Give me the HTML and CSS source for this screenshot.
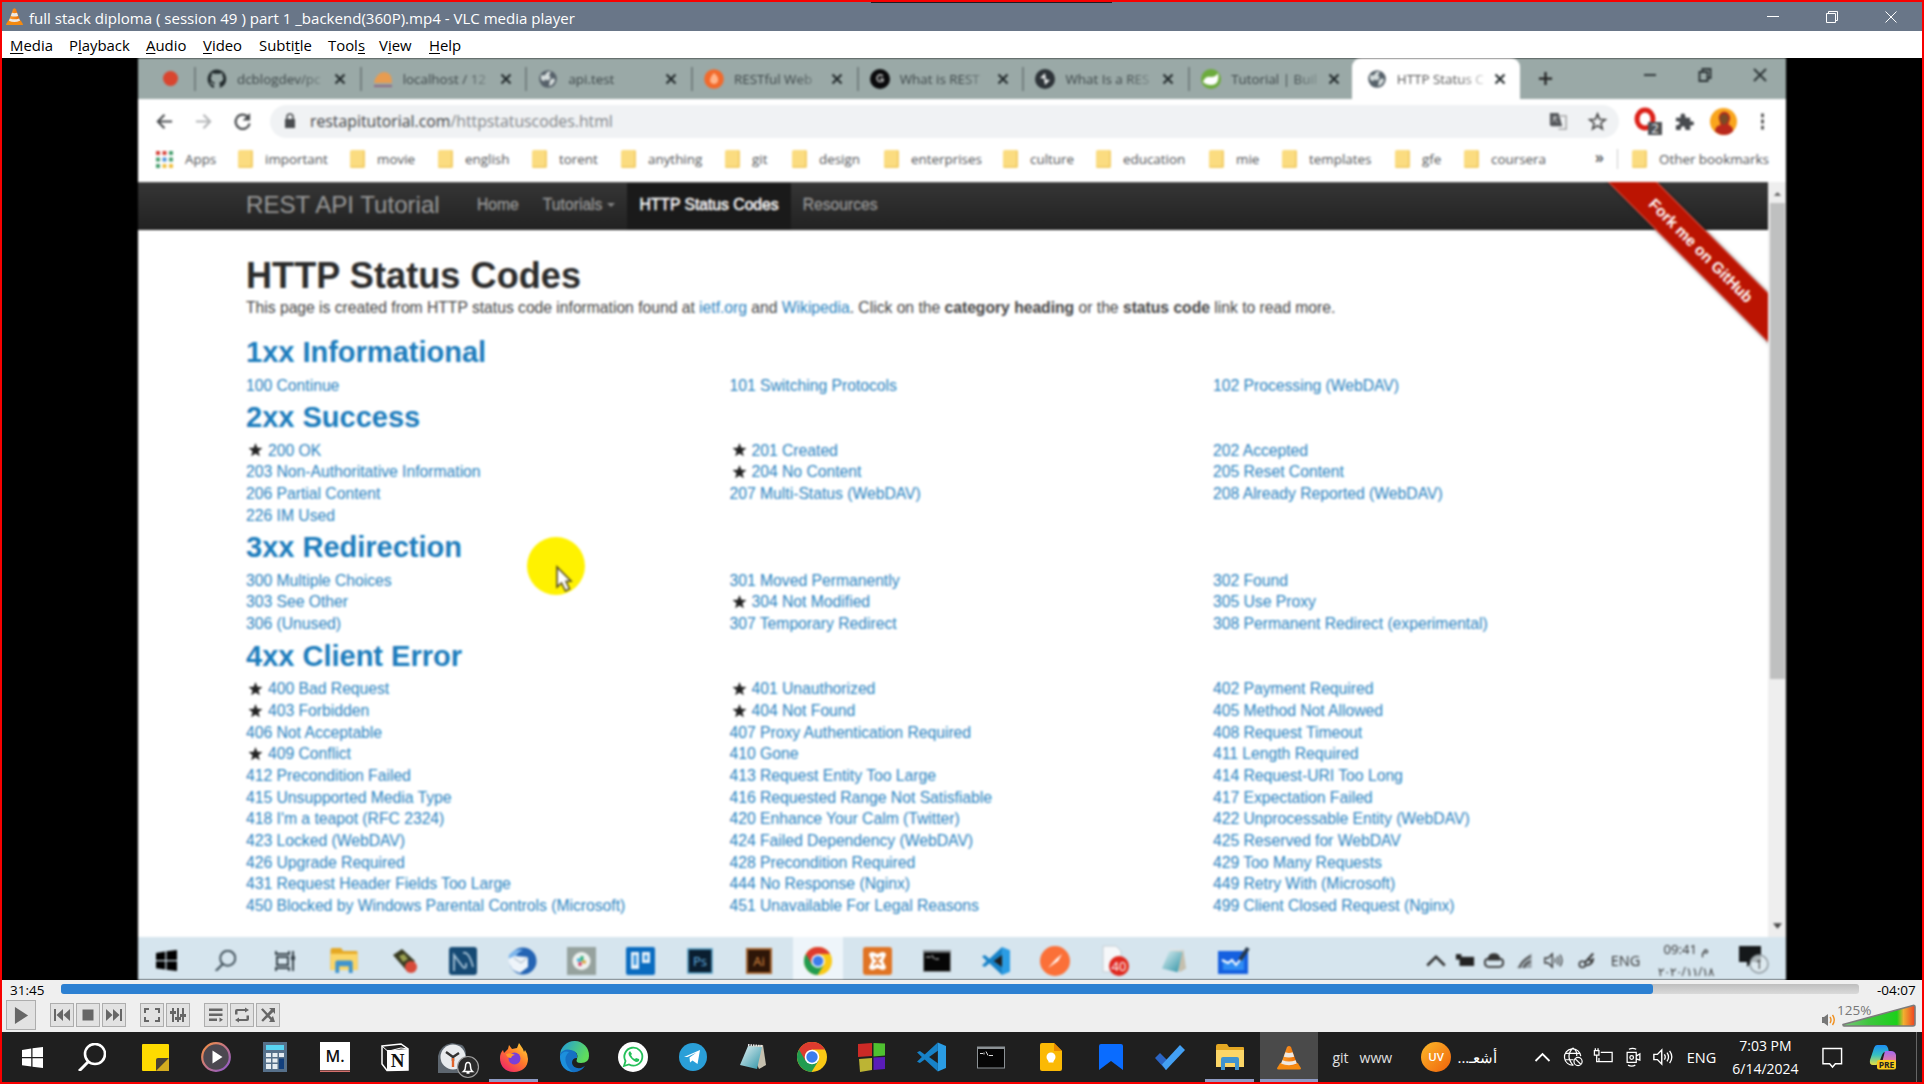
FILE: index.html
```html
<!DOCTYPE html>
<html lang="en">
<head>
<meta charset="utf-8">
<title>VLC media player</title>
<link rel="stylesheet" href="styles.css">
</head>
<body>
<svg class="defs" aria-hidden="true">
  <defs>
    <linearGradient id="g-vol" x1="0" x2="1"><stop offset="0" stop-color="#7cc47c"/><stop offset=".35" stop-color="#3fc63f"/><stop offset=".75" stop-color="#1bd01b"/><stop offset=".84" stop-color="#f0b030"/><stop offset="1" stop-color="#f04020"/></linearGradient>
    <linearGradient id="g-ff" x1="1" y1="0" x2="0.2" y2="1"><stop offset="0" stop-color="#ffe23a"/><stop offset=".5" stop-color="#ff7a2a"/><stop offset="1" stop-color="#f0246a"/></linearGradient>
    <linearGradient id="g-edge" x1="0" y1="0" x2="1" y2=".4"><stop offset="0" stop-color="#1f9ae0"/><stop offset="1" stop-color="#5fdc5c"/></linearGradient>
    <linearGradient id="g-wmp" x1="0" y1="0" x2="1" y2="1"><stop offset="0" stop-color="#f79040"/><stop offset="1" stop-color="#8a58d0"/></linearGradient>
    <linearGradient id="g-uv" x1="0" y1="0" x2="1" y2="1"><stop offset="0" stop-color="#fbb92a"/><stop offset="1" stop-color="#f0620a"/></linearGradient>
    <linearGradient id="g-note" x1="0" y1="0" x2="1" y2="1"><stop offset="0" stop-color="#e4f2f4"/><stop offset="1" stop-color="#2e93a6"/></linearGradient>
    <linearGradient id="g-cone" x1="0" x2="1"><stop offset="0" stop-color="#ffa030"/><stop offset="1" stop-color="#ec6c00"/></linearGradient>
    <linearGradient id="g-cop1" x1="0" y1="0" x2="0" y2="1"><stop offset="0" stop-color="#1c8ef4"/><stop offset=".5" stop-color="#36c0c0"/><stop offset="1" stop-color="#e8e040"/></linearGradient>
    <linearGradient id="g-cop2" x1="0" y1="0" x2="0" y2="1"><stop offset="0" stop-color="#a468f0"/><stop offset="1" stop-color="#f48090"/></linearGradient>
    <symbol id="i-win" viewBox="0 0 20 20"><path d="M0 2.8 8.8 1.5V9.5H0zM10 1.3 20 0V9.5H10zM0 10.6H8.8V18.6L0 17.3zM10 10.6H20V20L10 18.8z"/></symbol>
    <symbol id="i-search" viewBox="0 0 28 28"><circle cx="17" cy="11" r="10" fill="none" stroke="currentColor" stroke-width="2.6"/><path d="M11 18 1 28" stroke="currentColor" stroke-width="3"/></symbol>
    <symbol id="i-close" viewBox="0 0 12 12"><path d="M1.5 1.5l9 9M10.500 1.500l-9 9" stroke="currentColor" stroke-width="2" fill="none"/></symbol>
    <symbol id="i-globe" viewBox="0 0 20 20"><circle cx="10" cy="10" r="8.800" fill="#56616a"/><path d="M3 6c3 1 5 0 6-3l4-.5-2 4 2 2-3 3-3-1-1 2-3-2zM12 11l4-2 1 3-3 4-3 1z" fill="#d5dcdc"/></symbol>
    <symbol id="i-chrome" viewBox="0 0 30 30"><circle cx="15" cy="15" r="15" fill="#f9c915"/><path d="M2 7.500A15 15 0 0 0 14.500 30L21.500 18.700 15 15z" fill="#219c50"/><path d="M2 7.500A15 15 0 0 1 28 7.500H15L8.500 18.700z" fill="#dd3b2f"/><circle cx="15" cy="15" r="7.300" fill="#fff"/><circle cx="15" cy="15" r="5.700" fill="#3b7ded"/></symbol>
    <symbol id="i-vscode" viewBox="0 0 30 30"><path d="M21.500 0 8 12.500 3 8.700 0 10.200 5 15 0 19.800l3 1.500 5-3.800L21.500 30z" fill="#1782c8"/><path d="M21.500 0 30 3.500v23L21.500 30z" fill="#2a9ce4"/><path d="M21.500 8.500v13L12.500 15z" fill="#1f1f1f" class="vs-gap"/></symbol>
    <symbol id="i-cmd" viewBox="0 0 28 22"><path d="M0 0H28V22H0z" fill="#8c9296"/><path d="M1 2.500H27V21H1z" fill="#060606"/><path d="M3 7h3M7 6v2M9 5l2 4M12 9h4" stroke="#ddd" stroke-width="1"/></symbol>
    <symbol id="i-folder" viewBox="0 0 28 26"><path d="M0 2Q0 0 2 0h9l2 3h14q1 0 1 1v19H0z" fill="#e5a823"/><path d="M0 6h28v17H0z" fill="#fbd667"/><path d="M5 26V15q0-2 2-2h14q2 0 2 2v11h-4v-7h-10v7z" fill="#3f94cf"/></symbol>
    <symbol id="i-notepad" viewBox="0 0 28 28"><path d="M10 3 24 2l3 20-7 4z" fill="#c5bfae"/><path d="M9 3 23 4 18 26 1 22z" fill="url(#g-note)"/><path d="M9 2l15 1" stroke="#e8e8e8" stroke-width="2" stroke-dasharray="1.500 1"/></symbol>
    <symbol id="i-cone" viewBox="0 0 30 30"><path d="M4 22h22l4 6.500q0 1.500-2 1.500H2q-2 0-2-1.500z" fill="#f58a10"/><path d="M12.500 2q2.500-3 5 0L25 23q-10 5-20 0z" fill="url(#g-cone)"/><path d="M10.500 8.500q4.500 1.500 9 0l2 5.500q-6.500 2-13 0zM6.700 18.500q8.300 3 16.600 0l1.500 4q-9.800 4.500-19.600 0z" fill="#eee9e4"/></symbol>
    <symbol id="i-speaker" viewBox="0 0 24 20"><path d="M1 7h4l5-5v16l-5-5H1z" fill="none" stroke="currentColor" stroke-width="1.600"/><path d="M13 7q2 3 0 6M16 5q3.500 5 0 10M19 3q5 7 0 14" fill="none" stroke="currentColor" stroke-width="1.500"/></symbol>
    <symbol id="i-up" viewBox="0 0 16 10"><path d="M1 9 8 2l7 7" fill="none" stroke="currentColor" stroke-width="1.800"/></symbol>
    <symbol id="i-star" viewBox="0 0 20 20"><path d="M10 0l2.600 6.900 7.400.4-5.800 4.600 2 7.100L10 15l-6.200 4 2-7.100L0 7.300l7.400-.4z" fill="#222"/></symbol>
  </defs>
</svg>

<div class="desktop">
  <header class="titlebar">
    <svg class="app-icon"><use href="#i-cone"/></svg>
    <span class="title">full stack diploma ( session 49 ) part 1 _backend(360P).mp4 - VLC media player</span>
    <div class="win-buttons">
      <svg viewBox="0 0 14 14"><path d="M1 6.500h12"/></svg>
      <svg viewBox="0 0 14 14"><path d="M1.500 3.500h9v9h-9zM3.500 3.500v-2h9v9h-2"/></svg>
      <svg viewBox="0 0 14 14"><path d="M1.500 1.500l11 11M12.500 1.500l-11 11"/></svg>
    </div>
    <div class="top-handle"></div>
  </header>
  <nav class="menubar">
    <span><u>M</u>edia</span><span>P<u>l</u>ayback</span><span><u>A</u>udio</span><span><u>V</u>ideo</span><span>Subti<u>t</u>le</span><span>Tool<u>s</u></span><span>V<u>i</u>ew</span><span><u>H</u>elp</span>
  </nav>

  <main class="stage">
    <div class="video">
      <div class="tabs">
        <div class="rec"><i></i></div>
        <div class="tab"><svg viewBox="0 0 20 20"><path d="M10 .5a9.500 9.500 0 0 0-3 18.500v-3q-2.500.4-3.200-1.800l-1-1.200q1.700-.3 2.400 1.300 1 1 2.200.4l.5-1.300Q3.800 13 3.800 9l1-2.700-.1-2.500 2.600 1h5.400l2.600-1v2.500l1 2.700q0 4-4.200 4.400.7.800.7 2v3.600A9.500 9.500 0 0 0 10 .5z" fill="#222b2d"/></svg><span>dcblogdev/pc</span><svg class="x"><use href="#i-close"/></svg></div>
        <div class="tab"><svg viewBox="0 0 20 20"><path d="M1 14Q3 4 11 3q8 0 8 11z" fill="#e89c50"/><path d="M1 16h18v2H1z" fill="#8d6a84"/></svg><span>localhost / 12</span><svg class="x"><use href="#i-close"/></svg></div>
        <div class="tab"><svg><use href="#i-globe"/></svg><span>api.test</span><svg class="x"><use href="#i-close"/></svg></div>
        <div class="tab"><svg viewBox="0 0 20 20"><circle cx="10" cy="10" r="9.800" fill="#f26a2c"/><path d="M10 4q5 4 4 8-1 3-4 3t-4-3q0-4 4-8z" fill="#ffb48a"/></svg><span>RESTful Web</span><svg class="x"><use href="#i-close"/></svg></div>
        <div class="tab"><svg viewBox="0 0 20 20"><circle cx="10" cy="10" r="10" fill="#0a0a0c"/><path d="M13 7q-5-3-6 2 0 5 6 3v-2h-3" fill="none" stroke="#bbb" stroke-width="1.600"/></svg><span>What is REST</span><svg class="x"><use href="#i-close"/></svg></div>
        <div class="tab"><svg viewBox="0 0 20 20"><circle cx="10" cy="10" r="10" fill="#2d3338"/><path d="M5 9l5-5 1 6zM15 11l-5 5-1-6z" fill="#e8eaea"/></svg><span>What Is a RES</span><svg class="x"><use href="#i-close"/></svg></div>
        <div class="tab"><svg viewBox="0 0 20 20"><circle cx="10" cy="10" r="10" fill="#6cab3c"/><path d="M2 13Q4 7 10 8q5 0 7-4 2 12-7 12-5 0-8-3z" fill="#fff"/></svg><span>Tutorial | Buil</span><svg class="x"><use href="#i-close"/></svg></div>
        <div class="tab active"><svg><use href="#i-globe"/></svg><span>HTTP Status C</span><svg class="x"><use href="#i-close"/></svg></div>
        <svg class="plus" viewBox="0 0 16 16"><path d="M8 1v14M1 8h14" stroke="#222" stroke-width="2.400"/></svg>
        <div class="tab-win">
          <svg viewBox="0 0 14 14"><path d="M1 7h12"/></svg>
          <svg viewBox="0 0 14 14"><path d="M1.500 4h8v9h-8zM4.500 4V1h8v9h-3"/></svg>
          <svg viewBox="0 0 14 14"><path d="M1 1l12 12M13 1 1 13"/></svg>
        </div>
      </div>

      <div class="toolbar">
        <svg viewBox="0 0 20 20"><path d="M18 10H3M10 3l-7 7 7 7" fill="none" stroke="#4a4d50" stroke-width="2.200"/></svg>
        <svg viewBox="0 0 20 20"><path d="M2 10h15M10 3l7 7-7 7" fill="none" stroke="#b4b6b8" stroke-width="2.200"/></svg>
        <svg viewBox="0 0 20 20"><path d="M16 5.500A7.500 7.500 0 1 0 17.500 12" fill="none" stroke="#4a4d50" stroke-width="2.400"/><path d="M18 1v8h-8z" fill="#4a4d50"/></svg>
        <div class="omnibox">
          <svg class="lock" viewBox="0 0 12 16"><path d="M1 6h10v9H1z" fill="#4a4d50"/><path d="M3 6V4q0-3 3-3t3 3v2" fill="none" stroke="#4a4d50" stroke-width="1.600"/></svg>
          <span class="url">restapitutorial.com<em>/httpstatuscodes.html</em></span>
          <svg viewBox="0 0 20 20"><path d="M1 1h9l4 14H3q-2 0-2-2z" fill="#55585c"/><path d="M11 4h7v14h-8" fill="none" stroke="#999" stroke-width="1.400"/><path d="M4 6h5M6.500 4q0 5-3 6M5 7l4 4" stroke="#ddd" fill="none"/></svg>
          <svg viewBox="0 0 20 20"><path d="M10 2l2.200 5.700 6 .3-4.700 3.800 1.600 5.900L10 14.400l-5.100 3.300 1.600-5.900L1.800 8l6-.3z" fill="none" stroke="#444" stroke-width="1.700"/></svg>
        </div>
        <svg class="ext" viewBox="0 0 30 30"><ellipse cx="13" cy="13" rx="8" ry="9" fill="none" stroke="#dc2018" stroke-width="5"/><path d="M16 16h14v13H16z" fill="#4d5054"/><text x="23" y="27" font-size="13" text-anchor="middle" fill="#fff">2</text></svg>
        <svg viewBox="0 0 20 20"><path d="M1 6h5q-1-4 2-4.500T11 6h5v4q4-1 4 2t-4 2v5h-5q0-4-2.500-4T6 19H1v-5q4 0 4-2.500T1 10z" fill="#484b4f"/></svg>
        <svg class="avatar" viewBox="0 0 28 28"><circle cx="14" cy="14" r="14" fill="#f9a51c"/><path d="M5 24q1-6 6-6l-2-8q1-6 6-6t6 7l-2 6q5 2 5 7-9 8-19 0z" fill="#b9281c"/><path d="M10 12q0-6 5-6t4 7l-3 4h-3z" fill="#7a4a26"/></svg>
        <svg viewBox="0 0 20 20"><path d="M10 1.500v4M10 8v4M10 14.500v4" stroke="#555" stroke-width="3"/></svg>
      </div>

      <div class="bookmarks">
        <span class="apps"><svg viewBox="0 0 17 17"><path d="M0 0h4v4H0zM6.500 0h4v4h-4z" fill="#d6453c"/><path d="M13 0h4v4h-4zM0 6.500h4v4H0z" fill="#4aa070"/><path d="M6.500 6.500h4v4h-4z" fill="#4a90d8"/><path d="M13 6.500h4v4h-4zM0 13h4v4H0z" fill="#4aa070"/><path d="M6.500 13h4v4h-4zM13 13h4v4h-4z" fill="#f0c040"/></svg>Apps</span>
        <span><i></i>important</span><span><i></i>movie</span><span><i></i>english</span><span><i></i>torent</span><span><i></i>anything</span><span><i></i>git</span><span><i></i>design</span><span><i></i>enterprises</span><span><i></i>culture</span><span><i></i>education</span><span><i></i>mie</span><span><i></i>templates</span><span><i></i>gfe</span><span><i></i>coursera</span>
        <b>»</b>
        <span class="other"><i></i>Other bookmarks</span>
      </div>

      <div class="page">
        <div class="content">
          <div class="navbar">
            <span class="brand">REST API Tutorial</span><span>Home</span><span>Tutorials<i class="caret"></i></span><span class="current">HTTP Status Codes</span><span>Resources</span>
          </div>
          <div class="ribbon-clip"><div class="ribbon">Fork me on GitHub</div></div>
          <article>
            <h1>HTTP Status Codes</h1>
            <p>This page is created from HTTP status code information found at <a>ietf.org</a> and <a>Wikipedia</a>. Click on the <strong>category heading</strong> or the <strong>status code</strong> link to read more.</p>
            <h2>1xx Informational</h2>
            <div class="codes"><a>100 Continue</a><a>101 Switching Protocols</a><a>102 Processing (WebDAV)</a></div>
            <h2>2xx Success</h2>
            <div class="codes">
              <a><svg><use href="#i-star"/></svg>200 OK</a><a><svg><use href="#i-star"/></svg>201 Created</a><a>202 Accepted</a>
              <a>203 Non-Authoritative Information</a><a><svg><use href="#i-star"/></svg>204 No Content</a><a>205 Reset Content</a>
              <a>206 Partial Content</a><a>207 Multi-Status (WebDAV)</a><a>208 Already Reported (WebDAV)</a>
              <a>226 IM Used</a>
            </div>
            <h2>3xx Redirection</h2>
            <div class="codes">
              <a>300 Multiple Choices</a><a>301 Moved Permanently</a><a>302 Found</a>
              <a>303 See Other</a><a><svg><use href="#i-star"/></svg>304 Not Modified</a><a>305 Use Proxy</a>
              <a>306 (Unused)</a><a>307 Temporary Redirect</a><a>308 Permanent Redirect (experimental)</a>
            </div>
            <h2>4xx Client Error</h2>
            <div class="codes">
              <a><svg><use href="#i-star"/></svg>400 Bad Request</a><a><svg><use href="#i-star"/></svg>401 Unauthorized</a><a>402 Payment Required</a>
              <a><svg><use href="#i-star"/></svg>403 Forbidden</a><a><svg><use href="#i-star"/></svg>404 Not Found</a><a>405 Method Not Allowed</a>
              <a>406 Not Acceptable</a><a>407 Proxy Authentication Required</a><a>408 Request Timeout</a>
              <a><svg><use href="#i-star"/></svg>409 Conflict</a><a>410 Gone</a><a>411 Length Required</a>
              <a>412 Precondition Failed</a><a>413 Request Entity Too Large</a><a>414 Request-URI Too Long</a>
              <a>415 Unsupported Media Type</a><a>416 Requested Range Not Satisfiable</a><a>417 Expectation Failed</a>
              <a>418 I'm a teapot (RFC 2324)</a><a>420 Enhance Your Calm (Twitter)</a><a>422 Unprocessable Entity (WebDAV)</a>
              <a>423 Locked (WebDAV)</a><a>424 Failed Dependency (WebDAV)</a><a>425 Reserved for WebDAV</a>
              <a>426 Upgrade Required</a><a>428 Precondition Required</a><a>429 Too Many Requests</a>
              <a>431 Request Header Fields Too Large</a><a>444 No Response (Nginx)</a><a>449 Retry With (Microsoft)</a>
              <a>450 Blocked by Windows Parental Controls (Microsoft)</a><a>451 Unavailable For Legal Reasons</a><a>499 Client Closed Request (Nginx)</a>
            </div>
          </article>
          <svg class="pointer" viewBox="0 0 58 58"><circle cx="29" cy="29" r="29" fill="#fff200"/><path d="M30 30v20l4.500-4 4 8 4-2-3.500-7.500 5-.5z" fill="#fff" stroke="#554c20" stroke-width="1.600"/></svg>
        </div>
        <div class="scrollbar">
          <svg viewBox="0 0 10 6"><path d="M1 5l4-4 4 4z" fill="#555"/></svg>
          <div class="thumb"></div>
          <svg class="down" viewBox="0 0 10 6"><path d="M0 0l5 6 5-6z" fill="#444"/></svg>
        </div>
      </div>

      <div class="taskbar-in">
        <div class="in-apps">
          <div><svg width="21" height="21"><use href="#i-win"/></svg></div>
          <div><svg width="21" height="21" color="#42525c"><use href="#i-search"/></svg></div>
          <div><svg width="22" height="20" viewBox="0 0 22 20" fill="none" stroke="#39454d" stroke-width="2"><path d="M3 6h11v8H3zM2 0v3h13V0M2 20v-3h13v3M19 0v20"/><path d="M17 7h4" stroke-width="4"/></svg></div>
          <div><svg width="28" height="25"><use href="#i-folder"/></svg></div>
          <div><svg width="28" height="28" viewBox="0 0 28 28"><path d="M3 8 12 2l13 12-9 9z" fill="#3a3c22"/><path d="M9 9l5-2 4 5-5 3z" fill="#9aa050"/><circle cx="21" cy="20" r="6" fill="#d84a3a"/></svg></div>
          <div><svg width="28" height="28" viewBox="0 0 28 28"><rect width="28" height="28" rx="3" fill="#164a74"/><path d="M5 24V8l9 12q4 3 3-4M14 6q6-2 10 14" fill="none" stroke="#a8c4d8" stroke-width="1.800"/></svg></div>
          <div><svg width="30" height="28" viewBox="0 0 30 28"><circle cx="16" cy="14" r="13.500" fill="#2464b4"/><path d="M2 8q6-7 14-5-8 3-8 12Q0 18 2 8z" fill="#7eb6ec"/><path d="M1 12q2 12 12 14l8-6V10L8 9z" fill="#eef4fa"/><path d="M7 11l7 5 7-6" stroke="#9ab" fill="none"/></svg></div>
          <div><svg width="29" height="28" viewBox="0 0 29 28"><path d="M0 0h29v28H0z" fill="#96a29e"/><circle cx="14.500" cy="14" r="9" fill="#eef2f0"/><path d="M10 13h4" stroke="#36b0d8" stroke-width="3"/><path d="M15 9v5" stroke="#36b07c" stroke-width="3"/><path d="M15 15h4" stroke="#e0a840" stroke-width="3"/><path d="M13 15v4" stroke="#d83c64" stroke-width="3"/></svg></div>
          <div><svg width="29" height="28" viewBox="0 0 29 28"><rect width="29" height="28" rx="2" fill="#0a6cc0"/><path d="M5 5h8v17H5zM16 5h8v11h-8z" fill="#e8f2fa"/><path d="M7.500 8h3v10h-3zM18.500 8h3v5h-3z" fill="#3a94dc"/></svg></div>
          <div><svg width="26" height="26" viewBox="0 0 26 26"><path d="M1 1h24v24H1z" fill="#0a1e30" stroke="#4f9cc4" stroke-width="1.500"/><text x="13" y="18" font-size="13" text-anchor="middle" fill="#64b4e4">Ps</text></svg></div>
          <div><svg width="26" height="26" viewBox="0 0 26 26"><path d="M1 1h24v24H1z" fill="#2e1608" stroke="#a46430" stroke-width="2"/><text x="13" y="18" font-size="13" text-anchor="middle" fill="#d88840">Ai</text></svg></div>
          <div class="lit"><svg width="28" height="28"><use href="#i-chrome"/></svg></div>
          <div><svg width="29" height="28" viewBox="0 0 29 28"><rect width="29" height="28" rx="3" fill="#e07424"/><path d="M6 8q0-3 4-3l4.500 2L19 5q4 0 4 3l-3 6 3 6q0 3-4 3l-4.500-2L10 23q-4 0-4-3l3-6z" fill="#fff"/><path d="M11 10l3.500 3 3.500-3M11 18l3.500-3 3.500 3" fill="none" stroke="#e07424" stroke-width="2"/></svg></div>
          <div><svg width="28" height="22"><use href="#i-cmd"/></svg></div>
          <div class="light-vs"><svg width="30" height="28"><use href="#i-vscode"/></svg></div>
          <div><svg width="30" height="30" viewBox="0 0 30 30"><circle cx="15" cy="15" r="15" fill="#fb7038"/><path d="M8 22l8-9 6-5-4 7z" fill="#fff"/></svg></div>
          <div><svg width="30" height="32" viewBox="0 0 30 32"><path d="M3 1h13l5 5v21H3z" fill="#f6f8fa" stroke="#c4ccd2"/><circle cx="19" cy="21" r="10" fill="#e0281e"/><text x="19" y="26" font-size="13" text-anchor="middle" fill="#fff">40</text></svg></div>
          <div><svg width="28" height="26"><use href="#i-notepad"/></svg></div>
          <div><svg width="31" height="28" viewBox="0 0 31 28"><path d="M0 4h30v23H0z" fill="#1560e0"/><path d="M5 12l5 3 5-2 4 4 7-8v14H5z" fill="#2f8cf4"/><path d="M4 13l6 3 4-3 4 5 7-9" fill="none" stroke="#fff" stroke-width="2"/><path d="M30 1l-8 12" stroke="#26384c" stroke-width="4"/></svg></div>
        </div>
        <div class="in-tray">
          <svg viewBox="0 0 16 10"><path d="M1 9 8 2l7 7" fill="none" stroke="#333" stroke-width="2"/></svg>
          <svg viewBox="0 0 22 16"><path d="M5 4h16v10H5z" fill="#222"/><path d="M1 1h6v6H1z" fill="#222"/></svg>
          <svg viewBox="0 0 22 16"><path d="M5 15q-4 0-4-5 0-4 4-4 1-5 6-5t6 5q4 0 4 4 0 5-4 5z" fill="none" stroke="#333" stroke-width="2"/><path d="M4 8h14l-3-6H7z" fill="#333"/></svg>
          <svg viewBox="0 0 20 18"><path d="M2 17 18 1v16z" fill="#9aa4aa"/><path d="M5 17q1-7 12-13M10 17q1-5 7-7" fill="none" stroke="#444" stroke-width="1.600"/></svg>
          <svg color="#333"><use href="#i-speaker"/></svg>
          <svg viewBox="0 0 22 22"><circle cx="5" cy="16" r="4" fill="none" stroke="#333" stroke-width="2"/><path d="M8 14 19 2M10 17q8 0 9-9M12 8l6 5" fill="none" stroke="#333" stroke-width="2.600"/></svg>
          <span>ENG</span>
          <span class="clock"><bdo dir="ltr">09:41 م</bdo><br><bdo class="date" dir="ltr">٢٠٢٠/١١/١٨</bdo></span>
          <svg class="note" viewBox="0 0 30 28"><path d="M0 0h22v16h-9l-5 5v-5H0z" fill="#15181a"/><circle cx="20" cy="18" r="9" fill="#dfe9ef" fill-opacity=".75" stroke="#8c969c" stroke-width="1.400"/><text x="20" y="23" font-size="13" text-anchor="middle" fill="#333">1</text></svg>
        </div>
      </div>
    </div>
  </main>

  <div class="seek">
    <span>31:45</span>
    <div class="track"><div class="played"></div></div>
    <span class="left">-04:07</span>
  </div>
  <div class="controls">
    <button class="big"><svg viewBox="0 0 16 18"><path d="M1 0l14 9L1 18z"/></svg></button>
    <div class="group">
      <button><svg viewBox="0 0 16 12"><path d="M0 0h2v12H0zM9 0v12L2.500 6zM16 0v12L9.500 6z"/></svg></button>
      <button><svg viewBox="0 0 16 12"><path d="M2.500 0.500h11v11h-11z"/></svg></button>
      <button><svg viewBox="0 0 16 12"><path d="M14 0h2v12h-2zM7 0v12l6.500-6zM0 0v12l6.500-6z"/></svg></button>
    </div>
    <div class="group">
      <button><svg viewBox="0 0 16 14"><path d="M0 0h5v2H2v3H0zM11 0h5v5h-2V2h-3zM0 9h2v3h3v2H0zM14 9h2v5h-5v-2h3z"/></svg></button>
      <button><svg viewBox="0 0 16 14"><path d="M2 0h2v14H2zM7 0h2v14H7zM12 0h2v14h-2zM0 3h6v3H0zM5 9h6v3H5zM10 6h6v3h-6z"/></svg></button>
    </div>
    <div class="group">
      <button><svg viewBox="0 0 16 14"><path d="M1 .5h13.500v2.400H1zM1 5.500h13.500v2.400H1zM1 10.500h8v2.400H1zM11.500 9.500l3.500 2.200-3.500 2.300z"/></svg></button>
      <button><svg viewBox="0 0 16 14"><path d="M1 6.500V3q0-2 2-2h8V-.500L15 2l-4 2.500V3H3.500v3.500zM15 7.500V11q0 2-2 2H5v1.500L1 12l4-2.500V11h7.500V7.500z"/></svg></button>
      <button><svg viewBox="0 0 16 14"><path d="M1 1.500l1.800-1.200 8.700 9.200L13 8l2 6H9l1.500-2zM9 0h6v6l-1.800-2L3 13.700 1.300 12.200 11 1.800z"/></svg></button>
    </div>
    <div class="volume">
      <svg class="spk" viewBox="0 0 14 14"><path d="M0 4h2l4-3v12l-4-3H0z" fill="#777"/><path d="M8 4q2 3 0 6M10.500 2q3.500 5 0 10" fill="none" stroke="#f09020" stroke-width="1.400"/></svg>
      <div class="wedge"><svg viewBox="0 0 74 23"><path d="M1 20.500 71 1.500Q73 1 73 3v17q0 2-2 2H2q-1 0-1-1.500z" fill="url(#g-vol)" stroke="#7c7c7c" stroke-width="1.600"/></svg><span>125%</span></div>
    </div>
  </div>

  <footer class="taskbar">
    <div class="apps-row">
      <div class="start"><svg width="21" height="21" fill="#fff"><use href="#i-win"/></svg></div>
      <div class="find"><svg width="28" height="28" color="#fff"><use href="#i-search"/></svg></div>
      <div><svg width="27" height="27" viewBox="0 0 27 27"><path d="M0 1q0-1 1-1h25q1 0 1 1v13L14 27H1q-1 0-1-1z" fill="#fedb00"/><path d="M14 27V16q0-2 2-2h11z" fill="#4a4234"/><path d="M14 27 27 14v13z" fill="#d4ac20"/></svg></div>
      <div><svg width="30" height="30" viewBox="0 0 30 30"><circle cx="15" cy="15" r="13.800" fill="#4c4850" stroke="url(#g-wmp)" stroke-width="2.200"/><path d="M11.500 8.500 21.500 15l-10 6.500z" fill="#fff"/></svg></div>
      <div><svg width="24" height="30" viewBox="0 0 24 30"><path d="M0 0h24v30H0z" fill="#56708a"/><path d="M3 3h18v5H3z" fill="#58d4f4"/><path d="M3 11h5v4H3zM9.500 11h5v4h-5zM16 11h5v4h-5zM3 16.500h5v4H3zM9.500 16.500h5v4h-5zM3 22h5v5H3zM9.500 22h5v5h-5z" fill="#e6edf2"/><path d="M16 16.500h5V27h-5z" fill="#123f7c"/></svg></div>
      <div><svg width="30" height="30" viewBox="0 0 30 30"><path d="M0 0h30v28H0z" fill="#fff"/><path d="M0 28.500h30V30H0z" fill="#d4706c"/><text x="15" y="20" font-size="16" font-weight="600" text-anchor="middle" fill="#111">M.</text></svg></div>
      <div><svg width="28" height="28" viewBox="0 0 28 28"><path d="M1 3 20 1l7 5v21L6 27.500 1 21z" fill="#1f1f1f" stroke="#fff" stroke-width="1.500"/><path d="M6 7.500 27 6v21L6 27.500z" fill="#fff"/><path d="M1 3l5 4.500h4L20 5l7 1" stroke="#fff" fill="none"/><text x="16.500" y="24" font-size="19" font-weight="700" font-family="Liberation Serif, serif" text-anchor="middle" fill="#111">N</text></svg></div>
      <div class="alarm"><svg width="44" height="36" viewBox="0 0 44 36"><path d="M0 31V14Q2 3 14 1l10 2q4 3 4 10v18z" fill="#5d666f"/><circle cx="15" cy="15" r="12.500" fill="#e8ebee"/><path d="M8 10l7 5 6-4M15 15v4" stroke="#333" stroke-width="2.400" fill="none"/><path d="M15 16v9" stroke="#e0642c" stroke-width="2.400"/><circle cx="30" cy="25" r="10.500" fill="#2a2a2a" stroke="#a0a0a0" stroke-width="1.200"/><path d="M25.500 29.500q2-1.500 2-5 0-4 2.500-4t2.500 4q0 3.500 2 5zM28.500 31h3" fill="none" stroke="#fff" stroke-width="1.500"/></svg></div>
      <div class="run"><svg width="30" height="30" viewBox="0 0 30 30"><path d="M15 30C6 30 1 24 1 16q0-5 3-8l1 3 4-4 1-4 3 4 5-1 2-5 4 6 1 3 1-2q3 4 3 9c0 8-6 13-14 13z" fill="url(#g-ff)"/><circle cx="15.500" cy="16.500" r="6" fill="#7a3fd8"/><path d="M7 12q5-2 9 1-3 0-4 3-4 0-5-4z" fill="#ff9a2a"/></svg></div>
      <div><svg width="30" height="30" viewBox="0 0 30 30"><path d="M1 13A14.500 14.500 0 0 1 30 14q0 7-8 7-6 0-4-4 2-7-5-8-8-1-12 4z" fill="url(#g-edge)"/><path d="M1 12q4-6 11-4 7 1 6 8-5 0-5 5 1 6 9 5l4-2Q21 31 13 30 1 28 1 12z" fill="#1570c4"/><path d="M1 14q3-6 9-4-5 4-3 11 2 6 7 9Q1 28 1 14z" fill="#1c90dc"/></svg></div>
      <div><svg width="30" height="30" viewBox="0 0 30 30"><circle cx="15" cy="15" r="15" fill="#fff"/><path d="M6 24l1.500-5A9 9 0 1 1 11 22.500z" fill="none" stroke="#25c05a" stroke-width="1.800"/><path d="M12 9q-3 2 0 6 4 5 7 5 3-1 2-3l-3-1-1 1q-3-1-4-4l1-1z" fill="#25c05a"/></svg></div>
      <div><svg width="28" height="28" viewBox="0 0 28 28"><circle cx="14" cy="14" r="14" fill="#2a9fd8"/><path d="M5 14 21 7l-2.500 14-5-3.500-2.500 2-.5-5 7-5-9 4.500z" fill="#fff"/></svg></div>
      <div><svg width="28" height="28"><use href="#i-notepad"/></svg></div>
      <div><svg width="30" height="30"><use href="#i-chrome"/></svg></div>
      <div><svg width="27" height="29" viewBox="0 0 27 29"><path d="M0 1 14 0v13l-14 1z" fill="#cc2a26"/><path d="M15.500 0 27 .5v12l-11.500 1z" fill="#4fc030"/><path d="M1 16l13-1v12L2 29z" fill="#bcb434"/><path d="M15.500 14.500 27 14v12l-11.500 1z" fill="#5a1cb8"/></svg></div>
      <div><svg width="29" height="30"><use href="#i-vscode"/></svg></div>
      <div><svg width="28" height="23"><use href="#i-cmd"/></svg></div>
      <div><svg width="22" height="28" viewBox="0 0 22 28"><path d="M0 2q0-2 2-2h12l8 8v18q0 2-2 2H2q-2 0-2-2z" fill="#fbb905"/><path d="M14 0l8 8h-8z" fill="#e88a00"/><circle cx="11" cy="14" r="4.500" fill="#fff"/><path d="M8.500 17h5v2.500h-5z" fill="#fff"/></svg></div>
      <div><svg width="24" height="26" viewBox="0 0 24 26"><path d="M0 2q0-2 2-2h20q2 0 2 2v24l-12-9L0 26z" fill="#0a6cff"/></svg></div>
      <div><svg width="30" height="25" viewBox="0 0 30 25"><path d="M0 13l5-5 11 11-5 6z" fill="#2a64c4"/><path d="M11 25 30 5l-5-5L7 19.500z" fill="#43a0f4"/></svg></div>
      <div class="run"><svg width="28" height="26"><use href="#i-folder"/></svg></div>
      <div class="run on"><svg width="24" height="29"><use href="#i-cone"/></svg></div>
    </div>
    <div class="links"><span>git</span><span>www</span></div>
    <div class="uv"><svg width="30" height="30" viewBox="0 0 30 30"><circle cx="15" cy="15" r="15" fill="url(#g-uv)"/><text x="15" y="19" font-size="11.500" font-weight="600" text-anchor="middle" fill="#fff">UV</text></svg><span dir="rtl">أشعـ...</span></div>
    <div class="tray">
      <svg><use href="#i-up"/></svg>
      <svg viewBox="0 0 22 22" fill="none" stroke="#fff" stroke-width="1.300"><path d="M19 10A9 9 0 1 0 11 20M2.500 7h16M2.500 14H11M10.500 1q-9 9 0 19M10.500 1q5 4 4 9"/><circle cx="16" cy="16" r="4.500"/><path d="M13 13l6 6"/></svg>
      <svg viewBox="0 0 22 22" fill="none" stroke="#fff" stroke-width="1.400"><path d="M8 6h12.500v10H6v-4M1 4h5v5H1zM2 1.500V4M5 1.500V4M3.500 9v7H6"/></svg>
      <svg viewBox="0 0 22 22" fill="none" stroke="#fff" stroke-width="1.400"><path d="M4 6h10v11H4zM14 10l4-2.500v7L14 13M6 2.500q4-2 8 0M5 20q4 2 8 0"/><circle cx="9" cy="11.500" r="2"/></svg>
      <svg color="#fff"><use href="#i-speaker"/></svg>
      <span>ENG</span>
    </div>
    <div class="datetime">7:03 PM<br>6/14/2024</div>
    <svg class="action" viewBox="0 0 22 22"><path d="M1 1.500h19.500v16H14l-3 3.500-3-3.500H1z" fill="none" stroke="#fff" stroke-width="1.500"/></svg>
    <svg class="copilot" viewBox="0 0 26 26"><path d="M7 1h8q2 0 3 3l1 4h-4q-2 0-3 3l-3 8q-1 2-3 2H3q-4 0-3-5L4 4q1-3 3-3z" fill="url(#g-cop1)"/><path d="M15 7h6q4 0 5 4v8H12z" fill="url(#g-cop2)"/><rect x="7" y="16" width="19" height="9.500" rx="2" fill="#f8c81c"/><text x="16.500" y="24" font-size="8.500" font-weight="700" text-anchor="middle" fill="#222">PRE</text></svg>
    <div class="peek"></div>
  </footer>
</div>
</body>
</html>
```
FILE: styles.css
```css
* { box-sizing: border-box; }
body { margin: 0; background: #000; font-family: "Open Sans", "Noto Sans", sans-serif; }
.defs { position: absolute; width: 0; height: 0; }
svg { display: block; flex: none; overflow: visible; }

.desktop {
  width: 1924px; height: 1084px; border: 2px solid #f80000;
  display: flex; flex-direction: column; overflow: hidden;
}

/* VLC window frame */
.titlebar {
  position: relative; height: 29px; flex: none; background: #697688; color: #fff;
  display: flex; align-items: center; padding-left: 4px;
}
.app-icon { width: 17px; height: 19px; margin-top: -1px; }
.title { margin-left: 6px; padding-top: 2px; font-size: 15.050px; white-space: nowrap; flex: 1; }
.win-buttons { display: flex; width: 178px; }
.win-buttons svg { width: 14px; height: 14px; margin: 0 23px 0 22px; fill: none; stroke: #fff; stroke-width: 1; }
.top-handle { position: absolute; left: 869px; top: 0; width: 241px; height: 1px; background: #1c1c24; }

.menubar {
  height: 27px; flex: none; background: #fff; color: #000; font-size: 14.900px; line-height: 29px;
  display: grid; grid-template-columns: 59px 77px 57px 56px 69px 51px 50px 60px; padding-left: 8px;
}
.menubar u { text-underline-offset: 2px; text-decoration-thickness: 1px; }

/* video picture */
.stage { height: 922px; flex: none; background: #000; display: flex; justify-content: flex-start; padding-left: 136px; overflow: hidden; }
.video { width: 1648px; height: 922px; background: #fff; display: flex; flex-direction: column; filter: blur(1px); }

.tabs { height: 41px; flex: none; background: #9aa9a7; display: flex; font-size: 13.400px; color: #3c4648; }
.rec { width: 56px; display: flex; align-items: center; justify-content: center; padding-left: 8px; }
.rec i { width: 15px; height: 15px; border-radius: 50%; background: #d9452f; }
.tab {
  width: 165.700px; flex: none; display: grid; grid-template-columns: 20px 88px 12px; column-gap: 10px;
  align-items: center; padding-left: 13px; white-space: nowrap;
  background: linear-gradient(#74807f, #74807f) 0 50% / 2px 24px no-repeat;
}
.tab svg { width: 20px; height: 20px; }
.tab .x { width: 12px; height: 12px; margin-left: -1px; color: #20282a; }
.tab span { mask-image: linear-gradient(90deg, #000 70%, #0003); }
.tab.active { width: 168px; margin-left: -2px; padding-left: 15px; background: #fff; border-radius: 9px 9px 0 0; color: #555; }
.plus { width: 15px; height: 15px; margin: 13px 0 0 18px; }
.tab-win { display: flex; gap: 41px; margin: 10px 0 0 90px; }
.tab-win svg { width: 14px; height: 14px; fill: none; stroke: #2c3436; stroke-width: 1.900; }

.toolbar { height: 44px; flex: none; display: flex; align-items: center; padding-left: 7px; background: #fff; }
.toolbar > svg { width: 19px; height: 19px; margin: 0 10px; }
.omnibox { width: 1349px; height: 33px; margin: 0 7px 0 8px; border-radius: 17px; background: #f0f2f4; display: flex; align-items: center; padding: 0 12px 0 14px; }
.omnibox svg { width: 19px; height: 19px; margin-left: 20px; }
.omnibox .lock { width: 12px; height: 16px; margin: 0 14px 0 0; }
.url { flex: 1; font-size: 15.800px; color: #3c4043; }
.url em { font-style: normal; color: #808488; }
.toolbar > .ext { width: 30px; height: 30px; margin: 0 3px 0 6px; }
.toolbar > .avatar { width: 27px; height: 27px; margin: 0 6px; }

.bookmarks {
  height: 39px; flex: none; padding: 0 0 7px 18px; align-items: center; font-size: 13.400px; color: #505356; white-space: nowrap;
  display: grid; grid-template-columns: 82px 112px 88px 94px 89px 104px 67px 92px 119px 93px 113px 73px 113px 69px 131px 22px 160px;
}
.bookmarks span { display: flex; align-items: center; }
.bookmarks i { width: 15px; height: 18px; margin-right: 12px; border-radius: 2px; background: #fbdc80; box-shadow: inset -2px -2px #f3cf6c; }
.bookmarks .apps svg { width: 17px; height: 17px; margin-right: 12px; }
.bookmarks b { font-size: 16px; line-height: 18px; padding-bottom: 4px; font-weight: 600; }
.bookmarks .other { border-left: 1px solid #ccc; padding-left: 14px; height: 20px; }

/* web page in the browser */
.page { height: 755px; flex: none; display: flex; background: #fff; font-family: "Liberation Sans", Arial, sans-serif; }
.content { position: relative; width: 1630px; overflow: hidden; }
.navbar {
  height: 48px; display: flex; align-items: stretch; padding-left: 108px; line-height: 43px;
  font-size: 15.700px; color: #999; background: linear-gradient(#353535, #222); border-top: 1px solid #555;
  -webkit-text-stroke: .3px #999; white-space: nowrap;
}
.navbar span { padding: 0 12px; }
.navbar .brand { width: 219px; padding: 0; font-size: 24.100px; -webkit-text-stroke: 0; }
.navbar .current { background: #1a1a1a; color: #fff; -webkit-text-stroke: .5px #fff; }
.caret { display: inline-block; border: 4px solid transparent; border-top-color: #888; border-bottom: 0; margin-left: 5px; vertical-align: 3px; }
.ribbon-clip { position: absolute; right: 0; top: 0; width: 200px; height: 200px; overflow: hidden; }
.ribbon {
  position: absolute; left: 3px; top: 51px; width: 260px; height: 35px; line-height: 33px; transform: rotate(45deg);
  background: #bb1402; border: 1px solid #d4584c; box-shadow: 0 0 4px #0008; text-align: center;
  color: #fff; font-size: 15.500px; font-weight: 700;
}
article { padding: 24.400px 0 0 108px; color: #444; }
h1 { margin: 0; font-size: 36px; line-height: 43px; letter-spacing: .1px; color: #2b2b2b; }
p { margin: 0 0 12px; font-size: 15.670px; line-height: 21.700px; white-space: nowrap; }
h2 { margin: 0; font-size: 29px; line-height: 43.400px; color: #1c7cbc; }
a { color: #2a83c0; }
.codes { display: grid; grid-template-columns: 483.500px 483.500px 1fr; font-size: 15.700px; line-height: 21.700px; }
.codes a { display: flex; align-items: center; height: 21.700px; white-space: nowrap; }
.codes svg { width: 15px; height: 14px; margin: 0 5px 0 2px; }
.pointer { position: absolute; left: 389px; top: 355px; width: 58px; height: 58px; }
.scrollbar { width: 18px; background: #eee; display: flex; flex-direction: column; align-items: center; padding-top: 9px; }
.scrollbar svg { width: 9px; height: 6px; }
.thumb { width: 15px; height: 476px; margin-top: 6px; background: #bfc0c0; }
.scrollbar .down { margin-top: 244px; }

.taskbar-in { height: 43px; flex: none; background: #d6e5ee; display: flex; justify-content: space-between; color: #333; }
.in-apps { display: flex; margin-left: -1px; }
.in-apps div { width: 59.250px; display: flex; align-items: center; justify-content: center; padding-top: 4px; }
.in-apps .lit { background: linear-gradient(#eef5fa, #eef5fa) 50% 0 / 50px 43px no-repeat; }
.in-tray {
  width: 373px; padding: 0 4px 0 8px; display: grid; grid-template-columns: 29px 29px 30px 30px 30px 35px 43px 78px 57px;
  justify-items: center; align-items: center; font-size: 14.500px;
}
.in-tray svg { width: 20px; height: 17px; }
.in-tray .note { width: 30px; height: 28px; }
.clock { text-align: center; font-size: 13.200px; line-height: 22px; white-space: nowrap; padding-top: 1px; }
.date { font-size: 12px; letter-spacing: -1px; }

/* VLC controls */
.seek { height: 18px; flex: none; background: #efefef; display: flex; align-items: center; font-size: 13.500px; padding-left: 8px; color: #000; }
.seek span { width: 51px; line-height: 18px; padding-top: 1px; }
.track { width: 1798px; height: 10px; border-radius: 3px; background: linear-gradient(#bebebe, #dadada); margin-top: -1px; }
.played { width: 1592px; height: 10px; border-radius: 3px; background: #2c80d2; }
.seek .left { margin-left: 18px; width: 42px; }
.controls { height: 34px; flex: none; background: #efefef; display: flex; align-items: center; padding: 0 6px 0 4px; }
.controls button { width: 24px; height: 24px; padding: 0; border: 1px solid #adadad; background: #e2e2e2; display: flex; align-items: center; justify-content: center; }
.controls .big { width: 30px; height: 30px; }
.controls button svg { width: 16px; height: 14px; fill: #666; }
.controls .big svg { width: 15px; height: 17px; }
.group { display: flex; gap: 2px; margin-left: 14px; }
.volume { margin-left: auto; display: flex; align-items: flex-end; gap: 6px; }
.spk { width: 14px; height: 14px; margin-bottom: 0; }
.wedge { position: relative; }
.wedge svg { width: 74px; height: 23px; }
.wedge span { position: absolute; left: -5px; top: -3px; font-size: 13.500px; color: #777; line-height: 18px; }

/* Windows taskbar */
.taskbar { height: 50px; flex: none; background: #1f1f1f; display: flex; align-items: center; color: #fff; font-size: 14.500px; }
.apps-row { display: flex; flex: none; align-self: stretch; }
.apps-row div { width: 59.680px; display: flex; align-items: center; justify-content: center; }
.apps-row .start { width: 60px; }
.apps-row .find { width: 64px; padding-right: 4px; }
.apps-row .alarm { padding: 5px 0 0 12px; }
.apps-row .run { background: linear-gradient(#8f9bc4, #8f9bc4) 50% 100% / 49px 3px no-repeat; }
.apps-row .on { width: 58.700px; background: linear-gradient(#8f9bc4, #8f9bc4) 50% 100% / 59px 3px no-repeat, #4a4a4a; }
.links { display: flex; flex: none; gap: 11px; width: 103px; padding-left: 14px; color: #e0e0e0; font-size: 14px; }
.uv { display: flex; flex: none; align-items: center; gap: 6px; width: 106px; font-size: 15px; white-space: nowrap; }
.tray { display: grid; flex: none; grid-template-columns: 31px 30px 31px 29px 31px 44px; align-items: center; justify-items: center; width: 196px; }
.tray svg { width: 21px; height: 20px; }
.tray svg:first-child { width: 17px; height: 10px; }
.datetime { width: 82px; margin-left: 1px; flex: none; text-align: center; line-height: 23px; font-size: 14px; white-space: nowrap; }
.action { width: 21px; height: 21px; margin-left: 16px; }
.copilot { width: 26px; height: 26px; margin-left: 27px; }
.peek { width: 1px; height: 50px; margin: 0 5px 0 auto; background: #666; }
```
